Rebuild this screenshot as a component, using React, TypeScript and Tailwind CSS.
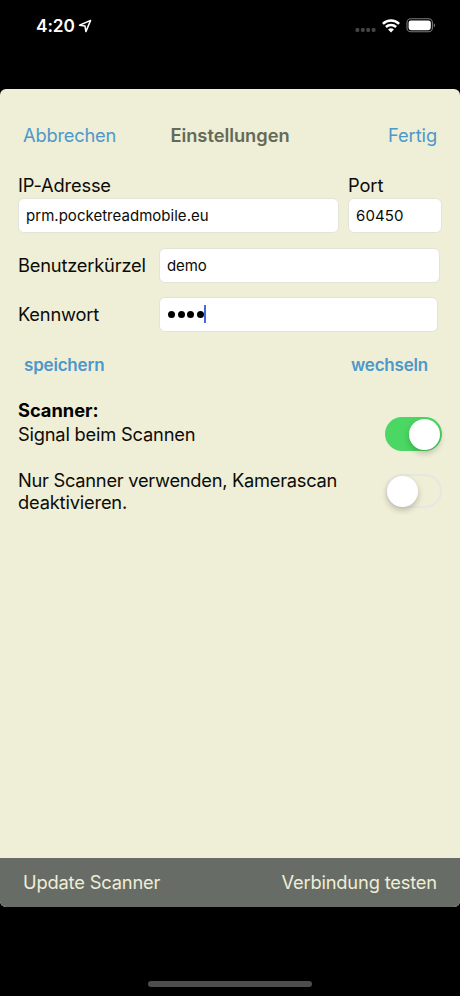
import { useState } from "react";

function StatusBar() {
	return (
		<div className="flex h-[89px] shrink-0 items-start justify-between pt-[15px] pr-[24px] pl-[36px] text-white">
			<div className="flex h-[22px] items-center gap-[3px]">
				<span className="text-[17.3px] leading-[22px] font-semibold tracking-[-0.1px]">4:20</span>
				<svg className="mb-[1px]" width="14" height="14" viewBox="0 0 14 14" fill="none" stroke="currentColor" strokeWidth="1.5" strokeLinejoin="round">
					<path d="M12.6 1.4 L1.5 6.2 L7 7.1 L7.9 12.6 Z" />
				</svg>
			</div>
			<div className="flex h-[21px] items-center">
				<svg width="21" height="20" viewBox="0 0 21 20" fill="#444444">
					<rect x="0.5" y="12.1" width="3.8" height="3.8" rx="1.3" />
					<rect x="5.9" y="12.1" width="3.8" height="3.8" rx="1.3" />
					<rect x="11.3" y="12.1" width="3.8" height="3.8" rx="1.3" />
					<rect x="16.7" y="12.1" width="3.8" height="3.8" rx="1.3" />
				</svg>
				<svg className="ml-[6px]" width="18" height="14" viewBox="0 0 18 14" fill="none" stroke="currentColor" strokeWidth="2.5">
					<path d="M0.9 4.8 A11.6 11.6 0 0 1 17.1 4.8" />
					<path d="M3.9 8 A7.3 7.3 0 0 1 14.1 8" />
					<path d="M9 13.5 L6.1 10.6 A4 4 0 0 1 11.9 10.6 Z" fill="currentColor" stroke="none" />
				</svg>
				<svg className="ml-[6px]" width="30" height="15" viewBox="0 0 30 15" fill="none">
					<rect x="1" y="0.8" width="25.4" height="13" rx="3.8" stroke="#7a7a7a" strokeWidth="1.1" />
					<rect x="2.6" y="2.4" width="22.2" height="9.8" rx="2.4" fill="white" />
					<path d="M27.8 5.2 A2.4 2.4 0 0 1 27.8 9.4 Z" fill="#7a7a7a" />
				</svg>
			</div>
		</div>
	);
}

function Field({ value, className }: { value: string; className: string }) {
	return (
		<div className={`flex h-[35px] items-center rounded-[6px] border border-[#e3e4d8] bg-white pl-[7px] text-[15px] ${className}`}>
			{value}
		</div>
	);
}

function Toggle({ initial }: { initial: boolean }) {
	const [on, setOn] = useState(initial);
	return (
		<button
			type="button"
			role="switch"
			aria-checked={on}
			onClick={() => setOn(!on)}
			className={`flex h-[34px] w-[57px] items-center rounded-full ${on ? "justify-end bg-[#4bd763] pr-[2px]" : "justify-start border-2 border-[#e7e6e0]"}`}
		>
			<span className="size-[31px] rounded-full bg-white shadow-[0_3px_6px_rgba(0,0,0,0.22)]" />
		</button>
	);
}

export default function App() {
	return (
		<div className="flex h-[996px] w-[460px] flex-col overflow-hidden bg-black font-['Inter',sans-serif] text-[18.3px] leading-[22px] tracking-[-0.2px] text-[#0b0b08]">
			<StatusBar />

			<main className="flex h-[818px] shrink-0 flex-col overflow-hidden rounded-[6px] bg-[#efeed6]">
				<header className="flex h-[85px] items-end justify-between pr-[23px] pl-[23px] pb-[28px] text-[#4d98cb]">
					<button type="button" className="w-[120px] text-left">Abbrechen</button>
					<h1 className="font-semibold tracking-[-0.03px] text-[#646a58]">Einstellungen</h1>
					<button type="button" className="w-[120px] text-right tracking-[-0.1px]">Fertig</button>
				</header>

				<div className="flex gap-[9px] pl-[18px] tracking-[-0.1px]">
					<label className="w-[321px]">
						<span className="block tracking-[-0.17px]">IP-Adresse</span>
						<Field value="prm.pocketreadmobile.eu" className="mt-[2px] tracking-[0.03px]" />
					</label>
					<label className="w-[94px]">
						<span className="block">Port</span>
						<Field value="60450" className="mt-[2px] tracking-[0.1px]" />
					</label>
				</div>

				<div className="mt-[15px] flex items-center pl-[18px]">
					<span className="w-[141px] pb-[2px]">Benutzerkürzel</span>
					<Field value="demo" className="w-[281px] tracking-[-0.1px]" />
				</div>
				<div className="mt-[14px] flex items-center pl-[18px]">
					<span className="w-[141px] pb-[2px]">Kennwort</span>
					<div className="flex h-[35px] w-[279px] items-center rounded-[6px] border border-[#e3e4d8] bg-white pl-[8px]">
						<div className="flex gap-[2.6px]">
							<span className="size-[7px] rounded-full bg-black" />
							<span className="size-[7px] rounded-full bg-black" />
							<span className="size-[7px] rounded-full bg-black" />
							<span className="size-[7px] rounded-full bg-black" />
						</div>
						<span className="mb-[2px] h-[18px] w-[2px] bg-[#4468e0]" />
					</div>
				</div>

				<div className="mt-[22px] flex justify-between pr-[32px] pl-[24px] text-[17px] font-semibold text-[#4d98cb]">
					<button type="button">speichern</button>
					<button type="button">wechseln</button>
				</div>

				<h2 className="mt-[23px] pl-[18px] font-bold tracking-[-0.03px] text-black">Scanner:</h2>
				<div className="mt-[-4px] flex h-[34px] items-center justify-between pr-[18px] pl-[18px]">
					<span>Signal beim Scannen</span>
					<Toggle initial={true} />
				</div>
				<div className="mt-[18px] flex items-start justify-between pr-[18px] pl-[18px] tracking-[-0.27px]">
					<p>
						Nur Scanner verwenden, Kamerascan
						<br />
						<span className="tracking-[-0.18px]">deaktivieren.</span>
					</p>
					<div className="mt-[5px]">
						<Toggle initial={false} />
					</div>
				</div>

				<footer className="mt-auto flex h-[49px] items-center justify-between bg-[#676d66] px-[23px] pb-[2px] tracking-[-0.17px] text-[#efeed6]">
					<button type="button">Update Scanner</button>
					<button type="button">Verbindung testen</button>
				</footer>
			</main>

			<div className="mt-[74px] h-[6px] w-[164px] shrink-0 self-center rounded-full bg-[#4d4d4d]" />
		</div>
	);
}
